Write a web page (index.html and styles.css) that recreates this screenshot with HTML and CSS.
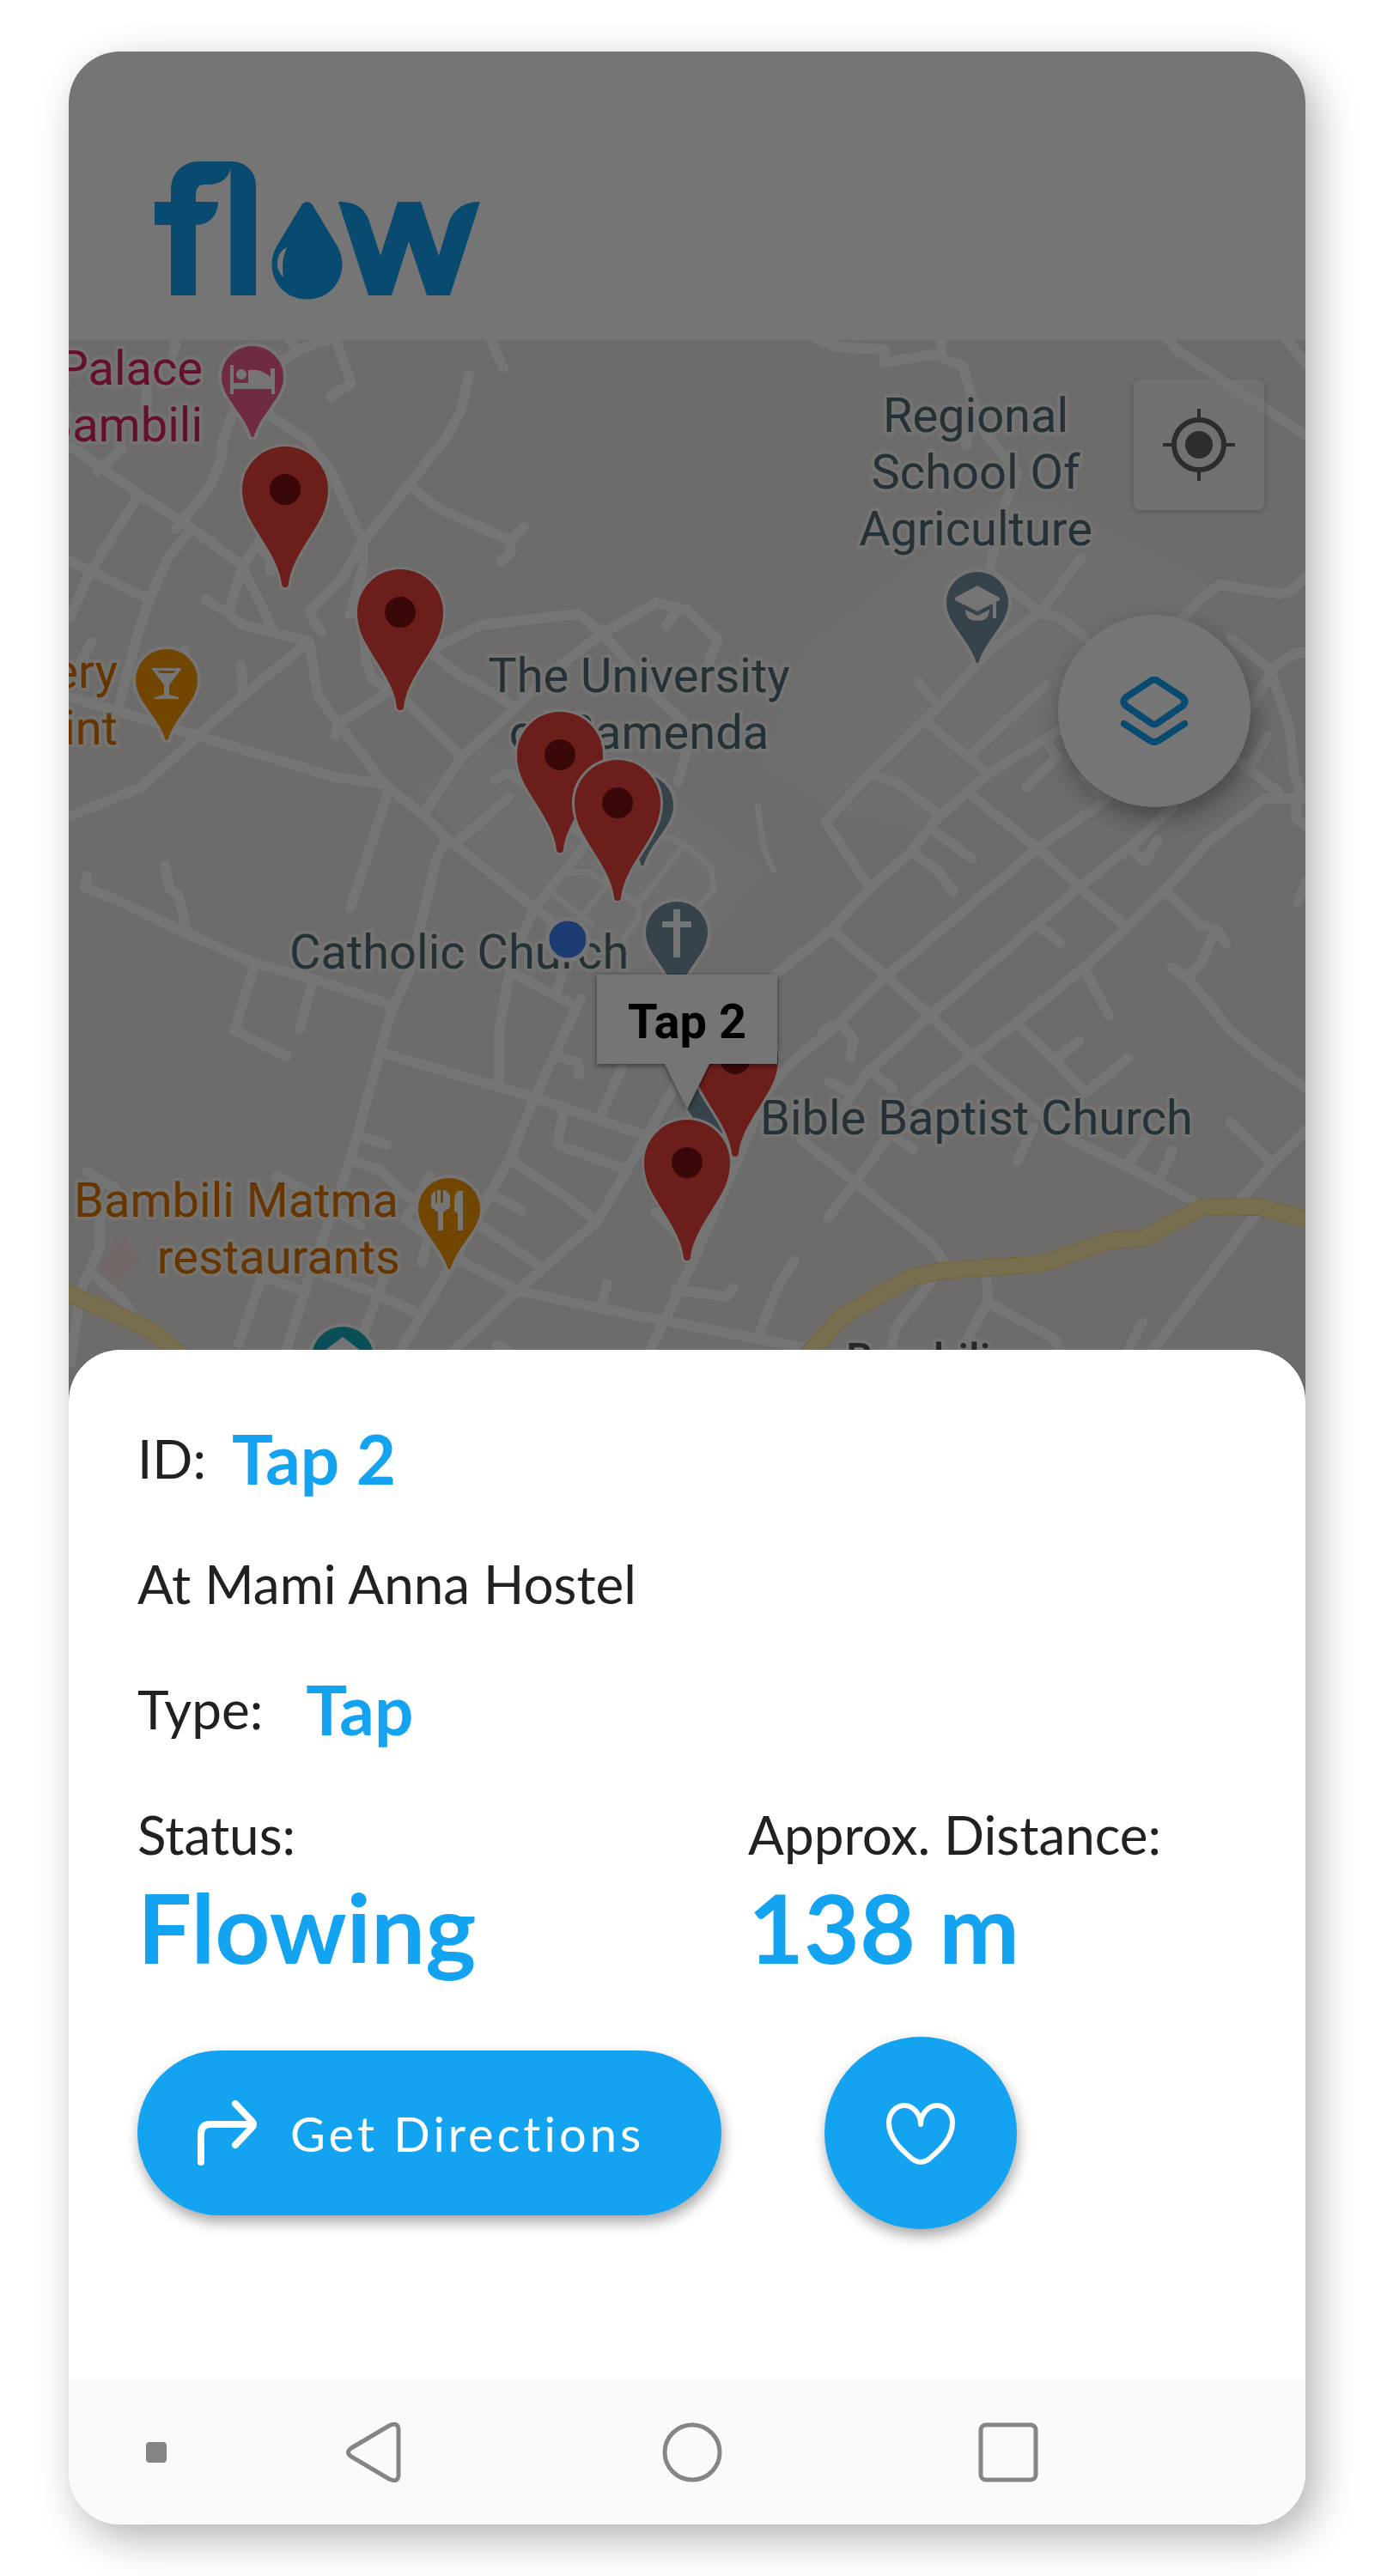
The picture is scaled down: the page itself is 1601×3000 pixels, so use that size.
FILE: index.html
```html
<!DOCTYPE html>
<html lang="en">
<head>
<meta charset="utf-8">
<meta name="viewport" content="width=device-width, initial-scale=1">
<title>Flow – Tap 2</title>
<link rel="stylesheet" href="styles.css">
</head>
<body>
<div class="phone">
  <header class="topbar">
    <svg class="logo" viewBox="180 188 380 161" role="img" aria-label="flow">
      <path d="M180 235H199V222C199 201 213 188 233 188H269C286 188 298 200 298 216V344H268.500V195C267 207 257 215 242 215H237C231 215 228 220 228 228V235H254C254 250 244 262 228 262V344H199V262H180Z"/>
      <path fill-rule="evenodd" d="M351 239C354 234 361 234 364 239L393 287C408 314 391 348.500 357.500 348.500C324 348.500 307 314 322 287ZM334 288C321 294 319 313 330 322.500C328 310 329 299 334 288Z"/>
      <path d="M394 235C414 235 426 242 431 261L443 298L463 235H490L511 298L522 261C527 244 540 235 559 235L524 344H497L476 281L456 344H429Z"/>
    </svg>
  </header>

  <main class="map">
    <svg class="map-canvas" viewBox="80 396 1440 1236" preserveAspectRatio="xMidYMin slice" role="img" aria-label="Map of taps around Bambili">
      <defs>
        <path id="roads" d="M82 520L118 544L162 576L215 609L281 658L317 732
          M239 698L266 714L281 727L360 747L370 810L394 843L448 913L491 948L525 980L622 1057L642 1072
          M271 482L259 513L258 535L244 567L205 616
          M312 482L358 513L385 549L423 631V660L407 716
          M546 437L537 477L520 509L474 567L423 631L399 672L360 713L374 736
          M477 565L508 591L593 629L610 614M593 629L595 643L583 654
          M162 576L104 667L82 718M82 654L174 698
          M220 620L196 649L174 698L159 743L138 823
          M302 629L281 663L266 714M302 636L314 652L315 665
          M201 390L205 402L196 424M171 451V470M142 522L113 549
          M331 419L351 406L390 393L409 446L385 462M336 392L346 408M569 390L586 428
          M496 760L559 728L673 715L702 737L765 702L800 710L836 745L825 770
          M787 712L776 728M702 737L642 783L598 827L537 882L494 947
          M702 737L763 810L806 850L790 910M506 763L540 790L554 795L598 823
          M424 743L426 770L433 790L477 820L537 882
          M496 760L446 810L394 843L390 857
          M353 753L283 810L230 857L164 917L78 952M281 775L283 807
          M78 811L133 827L230 857L390 905L448 913
          M107 748L94 770M215 757L205 780M453 920L408 1057
          M518 980L508 1000L477 1130L455 1180L409 1347L356 1500L331 1580
          M593 928L530 983M576 908L591 900L627 923L685 980L622 1058
          M101 1020L99 1033L147 1053L217 1087L297 1122L365 1140L455 1170
          M192 1008L198 1035L208 1043L217 1083M297 1123L273 1200L334 1230M365 1140L349 1198
          M622 1058L596 1117L581 1200V1263M598 1133L666 1170M654 1137L647 1157
          M676 1163L668 1180L622 1280L593 1350L523 1477L462 1580
          M448 1227L622 1278L753 1323M649 1230L673 1238L674 1252M724 1243L700 1298
          M656 1295L649 1333L729 1362
          M787 1263L753 1323L695 1423L632 1477L603 1503L520 1580
          M598 1353L663 1397L695 1423M574 1392L608 1410M559 1427L632 1477
          M535 1468L603 1503L695 1523L820 1547L938 1570M707 1495L700 1520M763 1412L792 1440
          M958 1200L979 1190L922 1237L892 1273L808 1467L753 1580
          M787 1502L846 1510L854 1500M579 1567L598 1578
          M419 1323L450 1333M414 1353L443 1363L467 1387L487 1400
          M501 1370L472 1420L499 1440L491 1470M322 1370L356 1387L419 1427
          M101 1365L133 1383M116 1413V1453L94 1503L82 1587M111 1487L142 1513L157 1533
          M305 1487L278 1565M307 1487L356 1505M375 1483L438 1507L482 1527M448 1487L424 1550
          M979 1190L994 1212L990 1232
          M1211 713L1152 757L1138 773L1093 823L1014 900L961 957L1012 1033
          M1211 714L1259 649M1152 665L1211 714L1234 719L1264 743
          M943 390L973 404L1030 407L1029 422L1086 413L1121 426L1132 464L1147 504L1185 551L1167 594L1152 665
          M1096 390V410M1125 486V520M1356 390L1371 408L1525 510M1493 390L1525 428
          M1525 668L1504 687L1491 692L1420 681L1394 701L1374 723
          M1078 840L1147 898M1132 927L1208 988L1257 1033L1308 1077
          M1239 847L1152 900L1091 953L1060 993L1012 1035L968 1083L890 1145
          M1218 797L1132 877M1070 795L1091 820M1019 903L1045 912L1091 947
          M1218 863L1231 882L1195 917M1290 930L1208 988L1032 1137L979 1190M1262 903L1285 930
          M1366 940L1315 987L1257 1033L1083 1183L1009 1250L980 1293
          M1315 987L1333 1003L1348 978
          M968 1083L1032 1137L1083 1183L1132 1230L1203 1290L1239 1323L1310 1357L1392 1400
          M1091 970L1132 1000M1063 993L1091 1013L1110 1038M1208 1077L1234 1098
          M1525 930H1473L1407 980L1356 1037L1262 1127L1172 1200L1132 1230L1065 1283
          M1262 1127L1291 1183
          M1356 1037L1397 1077L1417 1083L1427 1098M1415 1085L1397 1123L1382 1138L1364 1127M1382 1138L1433 1200L1468 1230L1525 1270
          M1433 743L1479 780L1502 850L1507 903L1514 920L1509 930V953L1525 965
          M1479 780L1509 760H1525M1479 787L1453 827M1476 857L1453 897M1443 887L1489 923M1522 1025L1511 1050
          M1183 1190L1234 1240L1264 1273L1314 1232M1234 1230L1257 1212
          M966 1260L989 1273M1014 1247L1040 1268
          M933 1327L996 1377L1086 1450L1101 1473M1035 1323L996 1377L964 1418M1040 1323L1063 1338M1203 1313L1185 1352
          M1336 1323L1313 1357M1365 1340L1348 1377M1432 1307L1479 1353
          M1525 1312L1479 1357L1445 1397M1463 1413L1336 1580M1330 1540L1310 1580
          M1086 1490L1042 1547L1037 1580M1148 1485L1151 1513L1126 1560M1151 1517L1229 1560L1236 1580
          M925 1468L905 1500L884 1553"/>
        <path id="lanes" d="M661 1017L685 1015L743 1053V1070L724 1097M646 1043L690 1077M675 1070L705 1033
          M743 1053L797 983L768 970M797 983L828 1010L831 1037L815 1053M882 938L889 987L901 1013"/>
        <path id="highway" d="M70 1502L157 1540L181 1553L212 1580M938 1580L981 1533L1060 1488L1096 1480L1213 1472L1292 1445L1332 1442L1401 1405L1468 1406L1530 1422"/>
        <g id="tap">
          <path d="M-50 0A50 50 0 0 1 50 0C50 14 46 26 39 38C27 60 7 84 4 110A4 4 0 0 1 -4 110C-7 84 -27 60 -39 38C-46 26 -50 14 -50 0Z"/>
          <circle r="18" fill="#3a0808" stroke="none"/>
        </g>
        <path id="place" d="M-38 0A38 38 0 0 1 38 0C38 26 12 42 4 68A4 4 0 0 1 -4 68C-12 42 -38 26 -38 0Z"/>
      </defs>

      <rect class="land" x="80" y="396" width="1440" height="1236"/>
      <path class="campus" d="M1157 580H1224L1407 674L1380 760L1228 860L1070 970L973 947L884 893L935 752L1004 700ZM487 923L560 860L800 938L893 1013L830 1090L740 1130L620 1060Z"/>
      <path class="clinic" d="M140 1437L164 1470L138 1497L113 1477Z"/>
      <use href="#roads" class="road-edge"/>
      <use href="#lanes" class="lane"/>
      <use href="#roads" class="road"/>
      <use href="#highway" class="highway-edge"/>
      <use href="#highway" class="highway"/>

      <g class="label hotel" text-anchor="end"><text x="236" y="448">Palace</text><text x="236" y="514">Bambili</text></g>
      <g class="label food" text-anchor="end"><text x="137" y="801">ery</text><text x="137" y="867">int</text><text x="464" y="1417">Bambili Matma</text><text x="466" y="1483">restaurants</text></g>
      <g class="label" text-anchor="middle"><text x="1136" y="503">Regional</text><text x="1136" y="569">School Of</text><text x="1136" y="635">Agriculture</text><text x="744" y="806">The University</text><text x="744" y="872">of Bamenda</text></g>
      <g class="label"><text x="337" y="1128">Catholic Church</text><text x="885" y="1321">Bible Baptist Church</text></g>
      <text class="label town" x="985" y="1600">Bambili</text>

      <g class="places">
        <g transform="translate(294 439)"><use href="#place" fill="#6f2b40"/>
          <path class="glyph" d="M-26 -14H-22V7H-5V-8C12 -10 18 -2 21 0V-10H26V20H22V14H-22V20H-26Z"/><circle class="glyph" cx="-13" cy="-3" r="6"/></g>
        <g transform="translate(194 792)"><use href="#place" fill="#704600"/>
          <path class="glyph" fill-rule="evenodd" d="M-18 -14H18L3 6V17L14 20V22H-14V20L-3 17V6ZM-11 -11L-8 -8H8L11 -11Z"/></g>
        <g transform="translate(523 1408)"><use href="#place" fill="#704600"/>
          <path class="glyph" d="M-21 -16L-16 -22V-7H-14V-22H-10V-7H-7V-22H-4V-22L1 -16V-2L-7 4V25H-13V4L-21 -2ZM16 -21V25H10V5L6 2V-12Q7 -18 10 -21Z"/></g>
        <g transform="translate(1138 702)"><use href="#place" fill="#37434a"/>
          <path class="glyph" d="M-26 -6L0 -20L26 -6V-3L0 10L-26 -3ZM-14 8L0 15L14 8C14 18 8 21 0 21C-8 21 -14 18 -14 8ZM18 0H22V18H18Z"/></g>
        <use href="#place" fill="#37434a" x="748" y="938"/>
        <g transform="translate(788 1086)"><use href="#place" fill="#37434a"/>
          <path class="glyph" d="M-4 -27H4V-13H17V-6H4V29H-4V-6H-17V-13H-4Z"/></g>
        <use href="#place" fill="#37434a" x="830" y="1270"/>
        <g transform="translate(399 1581)"><use href="#place" fill="#0a4f58"/><path class="glyph" d="M0 -24L24 -6H-24Z"/></g>
      </g>

      <circle class="me" cx="661" cy="1094" r="24"/>

      <g class="taps">
        <use href="#tap" x="332" y="570"/>
        <use href="#tap" x="466" y="713"/>
        <use href="#tap" x="652" y="879"/>
        <use href="#tap" x="719" y="935"/>
        <use href="#tap" x="856" y="1233"/>
        <use href="#tap" x="800" y="1354"/>
      </g>
      <path class="bubble" d="M695 1135H905V1239H826L800 1292L774 1239H695Z"/>
      <text class="bubble-text" x="800" y="1209" text-anchor="middle">Tap 2</text>
    </svg>

    <button class="locate" type="button" aria-label="My location">
      <svg viewBox="-42 -42 84 84"><circle r="29" fill="none" stroke-width="6"/><circle r="16" fill="#2d2d2d" stroke="none"/><path d="M0 -42V-31M0 31V42M-42 0H-31M31 0H42" stroke-width="4"/></svg>
    </button>
    <button class="layers" type="button" aria-label="Map layers">
      <svg viewBox="-40 -40 80 80"><path d="M-4 -35Q0 -38 4 -35L33 -16Q38 -11 33 -6L4 14Q0 17 -4 14L-33 -6Q-38 -11 -33 -16ZM-35 15L-6 34Q0 38 6 34L35 15"/></svg>
    </button>
  </main>

  <section class="sheet" aria-label="Tap details">
    <dl class="details">
      <div class="row row-id"><dt>ID:</dt><dd>Tap 2</dd></div>
      <div class="row"><dt>At Mami Anna Hostel</dt></div>
      <div class="row row-type"><dt>Type:</dt><dd>Tap</dd></div>
    </dl>
    <dl class="stats">
      <div><dt>Status:</dt><dd>Flowing</dd></div>
      <div><dt>Approx. Distance:</dt><dd>138 m</dd></div>
    </dl>
    <div class="actions">
      <button class="directions" type="button">
        <svg viewBox="0 0 70 76" aria-hidden="true"><path d="M4 72V40Q4 28 14 28H62M44 4L63 24Q67 28 63 32L44 52"/></svg>
        Get Directions
      </button>
      <button class="favourite" type="button" aria-label="Save to favourites">
        <svg viewBox="-42 -38 84 76"><path d="M0 -10C0 -22 -9 -32 -19 -32C-29 -32 -37 -23 -37 -12C-37 7 -22 20 -9 31Q0 37 9 31C22 20 37 7 37 -12C37 -23 29 -32 19 -32C9 -32 0 -22 0 -10Z"/></svg>
      </button>
    </div>
  </section>

  <nav class="sysbar" aria-label="System">
    <button type="button" aria-label="Hide bar"><svg class="small" viewBox="0 0 24 24"><rect width="24" height="24" rx="4" fill="#858585" stroke="none"/></svg></button>
    <button type="button" aria-label="Back"><svg viewBox="0 0 70 70"><path d="M6 30L50 4Q61 -1 61 9V61Q61 71 50 66L6 40Q-1 35 6 30Z"/></svg></button>
    <button type="button" aria-label="Home"><svg viewBox="0 0 70 70"><circle cx="35" cy="35" r="32"/></svg></button>
    <button type="button" aria-label="Recent apps"><svg viewBox="0 0 70 70"><rect x="3" y="3" width="64" height="64" rx="6"/></svg></button>
  </nav>
</div>
</body>
</html>
```
FILE: styles.css
```css
* { box-sizing: border-box; }

body {
  margin: 0;
  padding: 60px 81px 60px 80px;
  background: #fff;
  color: #212121;
  font-family: Lato, "Liberation Sans", sans-serif;
}

button {
  padding: 0;
  border: 0;
  background: none;
  color: inherit;
  font: inherit;
  cursor: pointer;
}

.phone {
  display: flex;
  flex-direction: column;
  min-height: calc(100vh - 120px);
  border-radius: 60px;
  overflow: hidden;
  background: #fff;
  box-shadow: 12px 16px 48px rgba(0, 0, 0, 0.3);
}

/* Header */
.topbar {
  height: 336px;
  padding: 128px 100px 0;
  background: #757575;
}
.logo { display: block; width: 380px; fill: #094b70; }

/* Map */
.map { position: relative; height: 1236px; }
.map-canvas { display: block; width: 100%; height: 100%; }
.land { fill: #6e6c6a; }
.campus { fill: #6e6e6e; }
.clinic { fill: #706766; }
.road, .road-edge, .lane, .highway, .highway-edge { fill: none; stroke-linecap: round; stroke-linejoin: round; }
.road { stroke: #757575; stroke-width: 12; }
.road-edge { stroke: #696b6b; stroke-width: 14; }
.lane { stroke: #757575; stroke-width: 7; }
.highway { stroke: #776f50; stroke-width: 18; }
.highway-edge { stroke: #75643a; stroke-width: 20; }
.label {
  fill: #243238;
  stroke: #737371;
  stroke-width: 8;
  stroke-linejoin: round;
  paint-order: stroke;
  font-family: Roboto, sans-serif;
  font-size: 56px;
}
.hotel { fill: #650f30; }
.food { fill: #673500; }
.town { fill: #26292b; font-size: 50px; font-weight: 500; }
.places { stroke: #757575; stroke-width: 4; }
.glyph { fill: #757575; stroke: none; }
.me { fill: #1d3c72; stroke: #757575; stroke-width: 5; }
.taps { fill: #6c1f1a; stroke: #757575; stroke-width: 6; paint-order: stroke; }
.bubble { fill: #757575; filter: drop-shadow(0 2px 3px rgba(0, 0, 0, 0.5)); }
.bubble-text { font-family: Roboto, sans-serif; font-size: 56px; font-weight: 700; fill: #000; }

.locate, .layers { position: absolute; display: grid; place-items: center; }
.locate {
  top: 46px;
  right: 48px;
  width: 152px;
  height: 152px;
  border-radius: 8px;
  background: rgba(117, 117, 115, 0.6);
  box-shadow: 0 2px 6px rgba(0, 0, 0, 0.2);
}
.locate svg { width: 84px; stroke: #2d2d2d; }
.layers {
  top: 320px;
  right: 64px;
  width: 224px;
  height: 224px;
  border-radius: 50%;
  background: #757575;
  box-shadow: 4px 12px 28px rgba(0, 0, 0, 0.35);
}
.layers svg { width: 80px; fill: none; stroke: #094b70; stroke-width: 8; stroke-linecap: round; stroke-linejoin: round; }

/* Bottom sheet */
.sheet {
  position: relative;
  flex: 1;
  margin-top: -60px;
  padding: 78px 80px 120px;
  border-radius: 60px 60px 0 0;
  background: #fff;
  font-size: 62px;
}
dl, dd { margin: 0; }
dd { color: #14a3f0; font-weight: 700; }
.details { display: grid; gap: 50px; margin-bottom: 50px; }
.row { display: flex; align-items: center; height: 96px; }
.row dd { font-size: 80px; }
.row-id { gap: 30px; }
.row-type { gap: 50px; }
.stats { display: grid; grid-template-columns: 5fr 4fr; }
.stats dt { line-height: 96px; white-space: nowrap; }
.stats dd { font-size: 112px; line-height: 120px; }
.actions { display: flex; align-items: center; gap: 120px; margin-top: 68px; }
.directions, .favourite {
  background: #14a3f0;
  color: #fff;
  box-shadow: 2px 8px 16px rgba(0, 0, 0, 0.35);
}
.directions {
  display: flex;
  align-items: center;
  gap: 38px;
  width: 680px;
  height: 192px;
  padding: 0 70px;
  border-radius: 96px;
  font-size: 56px;
  letter-spacing: 4px;
  white-space: nowrap;
}
.directions svg { flex: none; width: 70px; fill: none; stroke: #fff; stroke-width: 8; stroke-linecap: round; }
.favourite { display: grid; place-items: center; width: 224px; height: 224px; border-radius: 50%; }
.favourite svg { width: 84px; fill: none; stroke: #fff; stroke-width: 6; stroke-linejoin: round; }

/* System navigation */
.sysbar {
  display: grid;
  grid-template-columns: 144fr 368fr 368fr 368fr;
  height: 168px;
  padding: 0 162px 0 30px;
  background: #fafafa;
}
.sysbar button { display: grid; place-items: center; }
.sysbar svg { width: 70px; fill: none; stroke: #858585; stroke-width: 5; }
.sysbar .small { width: 24px; }
```
